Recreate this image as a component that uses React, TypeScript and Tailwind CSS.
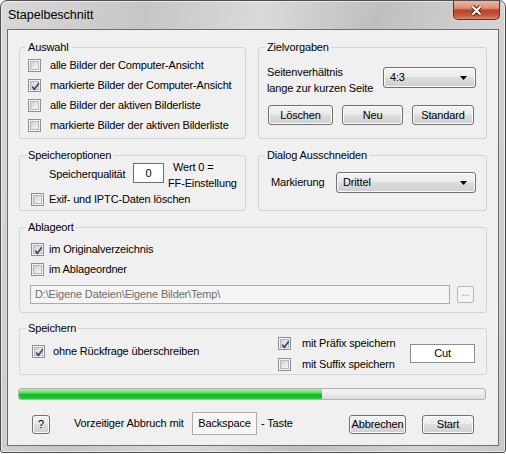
import React from "react";

const btn =
  "flex items-center justify-center border border-[#707070] rounded-[3px] bg-[linear-gradient(#f3f3f3,#ebebeb_45%,#dddddd_50%,#cfcfcf)] shadow-[inset_0_0_0_1px_#fbfbfb] text-black";

function Check({ on, className = "" }: { on?: boolean; className?: string }) {
  return (
    <span className={"relative flex h-[13px] w-[13px] shrink-0 items-center justify-center border border-[#8e8f8f] bg-[#f4f4f4] " + className}>
      <span className="h-[9px] w-[9px] border border-[#b4b8bd] bg-[linear-gradient(135deg,#cdd1d7,#f7f7f7)]" />
      {on && (
        <svg className="absolute left-[1px] top-[1px]" width="11" height="11" viewBox="0 0 11 11">
          <path d="M2.2 5.6 L4.4 8.3 L8.8 2.2" fill="none" stroke="#384d75" strokeWidth="1.7" />
        </svg>
      )}
    </span>
  );
}

function Group({ title, className = "", children }: { title: string; className?: string; children?: React.ReactNode }) {
  return (
    <fieldset className={"min-w-0 rounded-[3px] border border-[#d3d6d9] " + className}>
      <legend className="ml-[6px] px-[2px] leading-[15px]">{title}</legend>
      {children}
    </fieldset>
  );
}

function Arrow() {
  return (
    <svg width="7" height="4" viewBox="0 0 7 4" className="mr-[8px]">
      <path d="M0 0H7L3.5 4Z" fill="#000" />
    </svg>
  );
}

export default function App() {
  return (
    <div className="h-[454px] w-[506px] whitespace-nowrap bg-white font-['Liberation_Sans',Arial,sans-serif] text-[11px] tracking-[-0.15px] text-black">
      <div className="flex h-[453px] w-[506px] flex-col rounded-t-[7px] rounded-b-[3px] border border-[#4f4f4f] bg-[linear-gradient(100deg,#d9d9d9,#c6c6c6_25%,#dadada_45%,#bfbfbf_65%,#d3d3d3_85%,#c9c9c9)] shadow-[inset_0_0_0_1px_rgba(255,255,255,0.55)]">
        {/* title bar */}
        <div className="flex h-[28px] items-start justify-between">
          <span className="pl-[7px] pt-[7px] text-[12.5px] leading-[15px] tracking-normal">Stapelbeschnitt</span>
          <div className="mr-[5px] flex h-[19px] w-[47px] items-center justify-center rounded-b-[5px] border border-t-0 border-[#6b2c1b] bg-[linear-gradient(#ecb7a1,#dc8d74_40%,#b9432c_52%,#c35a3c_80%,#d98a6a)]">
            <svg width="15" height="11" viewBox="0 0 15 11">
              <path d="M3.5 1.5 L11.5 9.5 M11.5 1.5 L3.5 9.5" stroke="#4a1c12" strokeWidth="4" />
              <path d="M3.5 1.5 L11.5 9.5 M11.5 1.5 L3.5 9.5" stroke="#fff" strokeWidth="2.2" />
            </svg>
          </div>
        </div>

        {/* client area */}
        <div className="mx-[6px] h-[417px] border border-[#6e6e6e] bg-[#f0f0f0] px-[11px] pt-[10px]">
          <div className="flex gap-[12px]">
            <Group title="Auswahl" className="h-[99px] w-[227px]">
              <div className="flex flex-col">
                {[
                  ["alle Bilder der Computer-Ansicht", false],
                  ["markierte Bilder der Computer-Ansicht", true],
                  ["alle Bilder der aktiven Bilderliste", false],
                  ["markierte Bilder der aktiven Bilderliste", false],
                ].map(([t, on]) => (
                  <div key={t as string} className="flex h-[20px] items-center">
                    <Check on={on as boolean} className="ml-[8px]" />
                    <span className="ml-[9px]">{t}</span>
                  </div>
                ))}
              </div>
            </Group>
            <Group title="Zielvorgaben" className="h-[99px] w-[229px]">
              <div className="flex items-start justify-between pl-[8px] pr-[10px] pt-[9px]">
                <div className="leading-[16px]">
                  Seitenverhältnis
                  <br />
                  lange zur kurzen Seite
                </div>
                <div className={btn + " mt-[3px] h-[21px] w-[93px] !justify-between"}>
                  <span className="pl-[6px]">4:3</span>
                  <Arrow />
                </div>
              </div>
              <div className="mt-[9px] flex gap-[9px] pl-[9px]">
                <div className={btn + " h-[20px] w-[65px]"}>Löschen</div>
                <div className={btn + " h-[20px] w-[61px]"}>Neu</div>
                <div className={btn + " h-[20px] w-[62px]"}>Standard</div>
              </div>
            </Group>
          </div>

          <div className="mt-[9px] flex gap-[12px]">
            <Group title="Speicheroptionen" className="h-[63px] w-[227px]">
              <div className="flex items-start">
                <span className="ml-[29px] mt-[3px] w-[79px] leading-[16px]">Speicherqualität</span>
                <div className="ml-[5px] flex h-[20px] w-[31px] items-center justify-center border border-[#6f6f6f] bg-white">0</div>
                <div className="-mt-[4px] ml-[4px] flex w-[74px] flex-col leading-[16px]">
                  <span className="pl-[5px]">Wert 0 =</span>
                  <span>FF-Einstellung</span>
                </div>
              </div>
              <div className="flex h-[16px] items-center">
                <Check className="ml-[11px]" />
                <span className="ml-[5px]">Exif- und IPTC-Daten löschen</span>
              </div>
            </Group>
            <Group title="Dialog Ausschneiden" className="h-[63px] w-[229px]">
              <div className="mt-[9px] flex items-center">
                <span className="ml-[12px] w-[65px]">Markierung</span>
                <div className={btn + " h-[21px] w-[140px] !justify-between"}>
                  <span className="pl-[6px]">Drittel</span>
                  <Arrow />
                </div>
              </div>
            </Group>
          </div>

          <Group title="Ablageort" className="mt-[9px] h-[93px] w-[468px]">
            <div className="pt-[4px]">
              <div className="flex h-[20px] items-center">
                <Check on className="ml-[11px]" />
                <span className="ml-[5px]">im Originalverzeichnis</span>
              </div>
              <div className="flex h-[20px] items-center">
                <Check className="ml-[11px]" />
                <span className="ml-[5px]">im Ablageordner</span>
              </div>
            </div>
            <div className="ml-[10px] mt-[6px] flex items-center gap-[7px]">
              <div className="flex h-[19px] w-[420px] items-center border border-[#a9a9a9] bg-[#f4f4f4] pl-[4px] text-[#6d6d6d]">
                D:\Eigene Dateien\Eigene Bilder\Temp\
              </div>
              <div className="flex h-[17px] w-[17px] items-center justify-center rounded-[2px] border border-[#b5b9bd] bg-[#f4f4f4] pb-[4px] text-[10px] text-[#8a8a8a]">
                ...
              </div>
            </div>
          </Group>

          <Group title="Speichern" className="mt-[8px] h-[54px] w-[468px]">
            <div className="flex items-start">
              <div className="mt-[5px] flex h-[20px] w-[258px] items-center">
                <Check on className="ml-[12px]" />
                <span className="ml-[8px]">ohne Rückfrage überschreiben</span>
              </div>
              <div className="-mt-[1px] flex w-[132px] flex-col gap-[5px]">
                <div className="flex h-[16px] items-center">
                  <Check on />
                  <span className="ml-[11px]">mit Präfix speichern</span>
                </div>
                <div className="flex h-[16px] items-center">
                  <Check />
                  <span className="ml-[11px]">mit Suffix speichern</span>
                </div>
              </div>
              <div className="mt-[8px] flex h-[19px] w-[65px] items-center justify-center border border-[#8d8d8d] bg-white">Cut</div>
            </div>
          </Group>

          {/* progress */}
          <div className="-ml-[1px] mt-[13px] flex h-[12px] w-[468px] overflow-hidden rounded-[3px] border border-[#b2b2b2] bg-[linear-gradient(#f4f4f4,#dedede)]">
            <div className="h-full w-[303px] bg-[linear-gradient(#a6f0a6,#5fdc5f_40%,#12b92a_55%,#2cc23f)]" />
          </div>

          {/* bottom row */}
          <div className="mt-[12px] flex h-[23px] items-center">
            <div className={btn + " ml-[13px] mt-[2px] h-[19px] w-[18px]"}>?</div>
            <span className="ml-[24px] w-[118px]">Vorzeitiger Abbruch mit</span>
            <div className="flex h-[23px] w-[65px] items-center justify-center border border-[#adadad] bg-[#f7f7f7]">Backspace</div>
            <span className="ml-[4px]">- Taste</span>
            <div className={btn + " ml-auto mt-[2px] h-[19px] w-[57px] border-[#3c3c3c]"}>Abbrechen</div>
            <div className={btn + " ml-[16px] mr-[13px] mt-[2px] h-[19px] w-[52px]"}>Start</div>
          </div>
        </div>
      </div>
    </div>
  );
}
